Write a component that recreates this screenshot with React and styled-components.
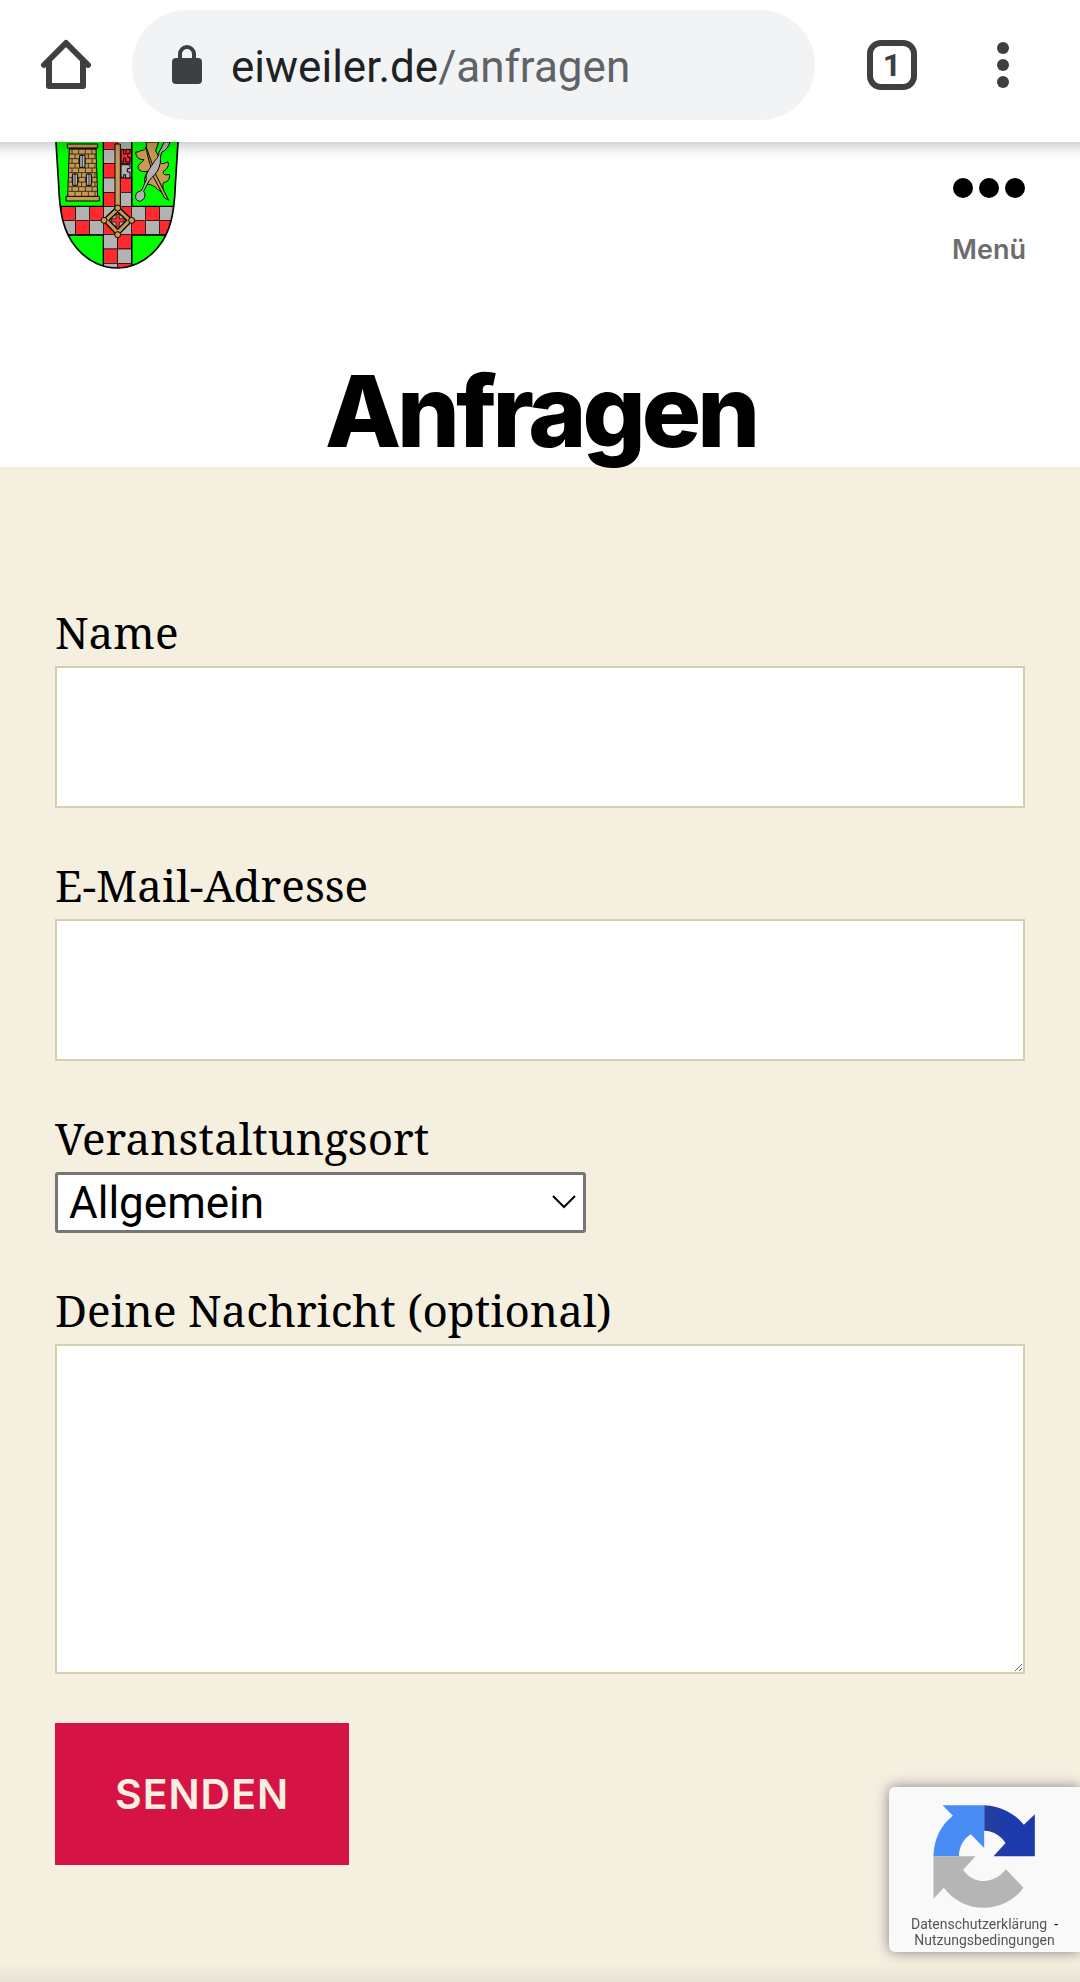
import React from 'react';
import styled, { createGlobalStyle } from 'styled-components';

const GlobalStyle = createGlobalStyle`
  *, *::before, *::after {
    box-sizing: border-box;
  }

  body {
    margin: 0;
    background: #f5efe0;
    color: #000;
    font-family: Inter, sans-serif;
  }

  button {
    margin: 0;
    padding: 0;
    border: 0;
    background: none;
    cursor: pointer;
  }

  svg {
    display: block;
  }
`;

const Page = styled.div`
  display: flex;
  flex-direction: column;
  min-height: 100vh;
`;

const Toolbar = styled.div`
  display: flex;
  align-items: center;
  height: 142px;
  padding: 0 50px 12px 40px;
  background: #fff;
  color: #3c4043;
  position: relative;

  &::after {
    content: '';
    position: absolute;
    top: 100%;
    left: 0;
    right: 0;
    height: 20px;
    background: linear-gradient(rgba(0, 0, 0, 0.17), rgba(0, 0, 0, 0.04) 50%, transparent);
  }
`;

const AddressBar = styled.button`
  display: flex;
  flex: 1;
  align-items: center;
  gap: 29px;
  height: 110px;
  margin: 0 52px 0 40px;
  padding: 4px 40px 0;
  border-radius: 55px;
  background: #f1f3f4;
  color: #202124;
  font-family: Roboto, sans-serif;
  font-size: 44px;
  line-height: 52px;
`;

const UrlPath = styled.span`
  color: #5f6368;
`;

const TabCount = styled.button`
  width: 50px;
  height: 50px;
  margin-right: 59px;
  border: 6px solid #3c4043;
  border-radius: 14px;
  color: #3c4043;
  font-family: Roboto, sans-serif;
  font-size: 32px;
  font-weight: 700;
  line-height: 38px;
`;

const Header = styled.header`
  padding: 0 54px 6px 55px;
  background: #fff;
`;

const HeaderRow = styled.div`
  display: flex;
  align-items: flex-start;
  justify-content: space-between;
`;

const MenuButton = styled.button`
  display: flex;
  flex-direction: column;
  align-items: center;
  gap: 36px;
  padding-top: 36px;
  color: #6d6d6d;
  font-family: Inter, sans-serif;
  font-size: 27px;
  font-weight: 600;
  line-height: 32px;
`;

const Title = styled.h1`
  position: relative;
  margin: 92px 0 0;
  font-size: 99px;
  font-weight: 800;
  letter-spacing: -4px;
  line-height: 99px;
  text-align: center;
`;

const Form = styled.form`
  display: flex;
  flex: 1;
  flex-direction: column;
  align-items: flex-start;
  gap: 49px;
  padding: 137px 55px 100px;
`;

const Field = styled.div`
  display: flex;
  flex-direction: column;
  align-items: flex-start;
  gap: 6px;
  width: 100%;
`;

const Label = styled.label`
  font-family: 'Noto Serif', 'Liberation Serif', serif;
  font-size: 44px;
  line-height: 56px;
`;

const Input = styled.input`
  width: 100%;
  height: 142px;
  padding: 40px 44px;
  border: 2px solid #d6cfae;
  border-radius: 0;
  background: #fff;
  font-family: Roboto, sans-serif;
  font-size: 44px;
`;

const TextArea = styled.textarea`
  display: block;
  width: 100%;
  height: 330px;
  padding: 40px 44px;
  border: 2px solid #d6cfae;
  border-radius: 0;
  background: #fff;
  font-family: Roboto, sans-serif;
  font-size: 44px;
  resize: vertical;
`;

const SelectWrap = styled.div`
  position: relative;
  width: 531px;
  max-width: 100%;

  svg {
    position: absolute;
    top: 22px;
    right: 9px;
    pointer-events: none;
  }
`;

const Select = styled.select`
  appearance: none;
  display: block;
  width: 100%;
  height: 61px;
  padding: 0 50px 0 11px;
  border: 3px solid #767676;
  border-radius: 3px;
  background: #fff;
  color: #000;
  font-family: Roboto, sans-serif;
  font-size: 44px;
  line-height: 52px;
`;

const SubmitButton = styled.button`
  padding: 48px 60px;
  background: #d61345;
  color: #f9efe0;
  font-family: Inter, sans-serif;
  font-size: 41px;
  font-weight: 600;
  letter-spacing: 1px;
  line-height: 46px;
  text-transform: uppercase;
`;

const CaptchaBadge = styled.aside`
  position: fixed;
  right: 0;
  bottom: 30px;
  display: flex;
  flex-direction: column;
  align-items: center;
  gap: 7px;
  width: 191px;
  padding: 18px 0 4px;
  border-radius: 6px 0 0 6px;
  background: #f9f9f9;
  box-shadow: 0 0 14px #808080;
  font-family: Roboto, sans-serif;
  font-size: 14px;
  line-height: 16px;
  text-align: center;

  a {
    color: #555;
    text-decoration: none;
  }
`;

const BottomShade = styled.div`
  position: fixed;
  right: 0;
  bottom: 0;
  left: 0;
  height: 18px;
  background: linear-gradient(transparent, rgba(90, 60, 60, 0.08));
  pointer-events: none;
`;

const HomeIcon = () => (
  <svg width="52" height="52" viewBox="0 0 52 52" fill="none" stroke="#3c4043" strokeWidth="6" strokeLinejoin="round">
    <path d="M4 26 L26 4 L48 26" strokeLinecap="round" />
    <path d="M9 22 V47 H43 V22" />
  </svg>
);

const LockIcon = () => (
  <svg width="30" height="44" viewBox="0 0 30 44">
    <rect y="13" width="30" height="26" rx="4" fill="#3c4043" />
    <path d="M8 15 V9 A7 7 0 0 1 22 9 V15" fill="none" stroke="#3c4043" strokeWidth="4" />
  </svg>
);

const MoreIcon = () => (
  <svg width="54" height="50" viewBox="0 0 54 50" fill="#3c4043">
    <circle cx="27" cy="8" r="6" />
    <circle cx="27" cy="25" r="6" />
    <circle cx="27" cy="42" r="6" />
  </svg>
);

const DotsIcon = () => (
  <svg width="72" height="20" viewBox="0 0 72 20">
    <circle cx="10" cy="10" r="10" />
    <circle cx="36" cy="10" r="10" />
    <circle cx="62" cy="10" r="10" />
  </svg>
);

const RED = '#ff2a30';
const GREY = '#b2b2b2';
const GOLD = '#c89b55';
const SHIELD =
  'M47 20 L56 165 C59 250 70 305 108 352 C145 398 195 414 231 414 C267 414 317 398 354 352 C392 305 403 250 406 165 L415 20 Z';

// checkered cross, as [x, y, colour]
const CROSS = [
  [190, 15, RED], [233, 15, GREY],
  [190, 58, GREY], [233, 58, RED],
  [190, 101, RED], [233, 101, GREY],
  [190, 144, GREY], [233, 144, RED],
  [190, 187, RED], [233, 187, GREY],
  [64, 230, RED], [107, 230, GREY], [149, 230, RED], [191, 230, GREY],
  [233, 230, RED], [275, 230, GREY], [317, 230, RED], [359, 230, GREY],
  [64, 272, GREY], [107, 272, RED], [149, 272, GREY], [191, 272, RED],
  [233, 272, GREY], [275, 272, RED], [317, 272, GREY], [359, 272, RED],
  [190, 314, GREY], [233, 314, RED],
  [190, 357, RED], [233, 357, GREY],
  [190, 400, GREY], [233, 400, RED],
];

const BRICK_ROWS = [58, 72, 86, 100, 114, 128, 142, 156, 170, 184];

const Crest = () => (
  <svg width="124" height="128" viewBox="45 36 372 384" role="img" aria-label="Wappen Eiweiler">
    <clipPath id="shield">
      <path d={SHIELD} />
    </clipPath>
    <g clipPath="url(#shield)" stroke="#000" strokeWidth="2">
      <rect x="40" y="20" width="380" height="400" fill="#0f0" />
      {CROSS.map(([x, y, fill]) => (
        <rect key={`${x}-${y}`} x={x} y={y} width="43" height="43" fill={fill} />
      ))}
      <path d="M40 229 H190 M275 229 H420 M40 315 H190 M275 315 H420 M190 30 V229 M275 30 V229 M190 315 V415 M275 315 V415" strokeWidth="4" />

      <path d="M88 55 H168 L173 200 H83 Z" fill={GOLD} strokeWidth="3" />
      {BRICK_ROWS.map((y, i) => (
        <path
          key={y}
          d={`M86 ${y} H171 ${[0, 1, 2, 3].map(n => `M${96 + n * 20 + (i % 2) * 9} ${y} v14`).join(' ')}`}
          fill="none"
          strokeWidth="2"
        />
      ))}
      <path d="M82 42 H173 V54 H82 Z M78 199 H178 V213 H78 Z" fill={GOLD} strokeWidth="3" />
      <path d="M119 76 H135 V112 H119 Z M98 132 H113 V166 H98 Z M139 132 H154 V166 H139 Z" fill={GREY} strokeWidth="3" />
      <path d="M127 76 V112 M105 132 V166 M147 132 V166" />

      <path
        d="M318 36 C322 50 318 60 307 61 C298 62 294 68 287 66 C287 80 296 90 312 89 C306 99 294 102 294 112 C297 123 307 127 323 124 C315 140 310 149 318 162 C330 163 343 166 356 181 L370 187 C371 176 365 164 372 157 C385 157 391 143 388 133 C377 136 368 135 370 124 C382 117 389 106 383 95 C374 101 362 105 360 94 C360 80 350 72 347 62 L356 36 Z"
        fill={GOLD}
        strokeWidth="3"
      />
      <path d="M318 50 L333 92 L348 135 L386 211 L374 204 L341 142 L323 77 Z" fill={GOLD} strokeWidth="3" />
      <path
        d="M373 36 L390 36 C386 52 376 61 365 67 C358 82 365 94 357 113 C352 128 339 139 328 151 L311 184 C320 195 313 211 299 214 C287 212 284 201 289 191 C293 184 300 184 305 181 L319 149 C315 133 328 117 339 101 C347 86 356 85 357 67 Z"
        fill={GREY}
        strokeWidth="3"
      />

      <g fill={GREY} strokeWidth="3">
        <path d="M243 58 H251 V72 H258 V58 H270 V70 H263 V82 H270 V96 H257 V84 H251 V96 H243 Z" fill={RED} />
        <path d="M243 104 H270 V116 H262 V126 H270 V144 H257 V134 H251 V142 H243 Z" />
      </g>
      <path d="M225 42 H241 V234 H225 Z" fill={GOLD} strokeWidth="3" />
      <path d="M233 228 L278 271 L233 317 L188 271 Z M233 246 L207 271 L233 298 L260 271 Z" fill={GOLD} fillRule="evenodd" strokeWidth="4" />
      <path d="M233 248 L258 271 L233 296 L209 271 Z" fill={GREY} />
      <path d="M228 253 H238 V266 H253 V276 H238 V291 H228 V276 H214 V266 H228 Z" fill={RED} />
      <g fill={GOLD} strokeWidth="3">
        <circle cx="233" cy="234" r="9" />
        <circle cx="192" cy="271" r="9" />
        <circle cx="275" cy="271" r="9" />
        <circle cx="233" cy="314" r="9" />
      </g>
    </g>
    <path d={SHIELD} fill="none" stroke="#000" strokeWidth="5" />
  </svg>
);

const ChevronIcon = () => (
  <svg width="25" height="17" viewBox="0 0 25 17" fill="none" stroke="#000" strokeWidth="2">
    <path d="M1 2 L12 13 L23 2" />
  </svg>
);

const CaptchaLogo = () => (
  <svg width="103" height="104" viewBox="192 105 308 312">
    <defs>
      <linearGradient id="navy">
        <stop offset="0" stopColor="#25409d" />
        <stop offset="0.5" stopColor="#1c3aad" />
      </linearGradient>
    </defs>
    <path
      d="M345 106 C395 108 435 130 464 164 L497 133 V259 H373 L409 219 C394 196 373 183 345 182 Z"
      fill="url(#navy)"
    />
    <path
      d="M345 106 H220 L251 137 C215 165 194 207 193 259 H269 C270 229 284 206 305 193 L345 234 Z"
      fill="#4a8cf5"
    />
    <path
      d="M193 259 H319 L282 299 C312 344 374 345 410 298 L463 353 C405 431 287 436 224 353 L193 386 Z"
      fill="#b5b5b5"
    />
  </svg>
);

const App = () => (
  <Page>
    <GlobalStyle />
    <Toolbar>
      <button type="button" aria-label="Startseite">
        <HomeIcon />
      </button>
      <AddressBar type="button">
        <LockIcon />
        <span>
          eiweiler.de<UrlPath>/anfragen</UrlPath>
        </span>
      </AddressBar>
      <TabCount type="button">1</TabCount>
      <button type="button" aria-label="Mehr">
        <MoreIcon />
      </button>
    </Toolbar>
    <Header>
      <HeaderRow>
        <a href="/" aria-label="eiweiler.de">
          <Crest />
        </a>
        <MenuButton type="button">
          <DotsIcon />
          Menü
        </MenuButton>
      </HeaderRow>
      <Title>Anfragen</Title>
    </Header>
    <Form onSubmit={e => e.preventDefault()}>
      <Field>
        <Label htmlFor="name">Name</Label>
        <Input id="name" type="text" />
      </Field>
      <Field>
        <Label htmlFor="email">E-Mail-Adresse</Label>
        <Input id="email" type="email" />
      </Field>
      <Field>
        <Label htmlFor="location">Veranstaltungsort</Label>
        <SelectWrap>
          <Select id="location" defaultValue="Allgemein">
            <option>Allgemein</option>
          </Select>
          <ChevronIcon />
        </SelectWrap>
      </Field>
      <Field>
        <Label htmlFor="message">Deine Nachricht (optional)</Label>
        <TextArea id="message" />
      </Field>
      <SubmitButton type="submit">Senden</SubmitButton>
    </Form>
    <BottomShade />
    <CaptchaBadge>
      <CaptchaLogo />
      <div>
        <a href="#privacy">Datenschutzerklärung</a> &nbsp;-
        <br />
        <a href="#terms">Nutzungsbedingungen</a>
      </div>
    </CaptchaBadge>
  </Page>
);

export default App;
